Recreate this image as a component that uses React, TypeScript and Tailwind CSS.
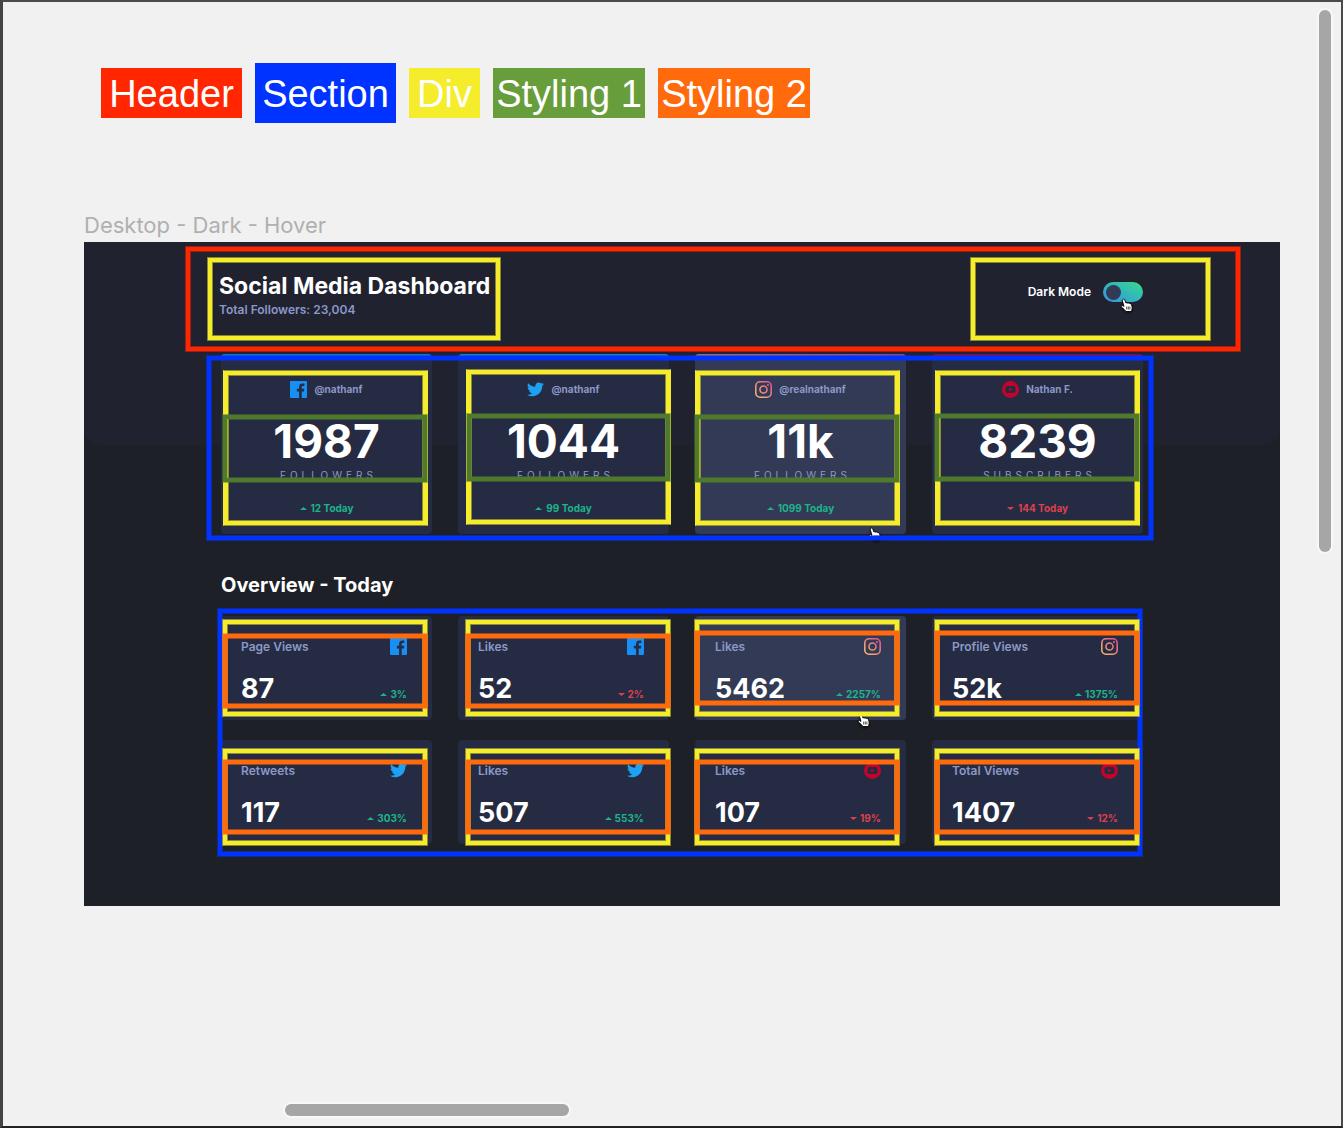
import React from "react";

type Network = "facebook" | "twitter" | "instagram" | "youtube";

const legend = [
  { name: "Header", box: "h-[50px] w-[141px] bg-[#ff2600]" },
  { name: "Section", box: "h-[60px] w-[141px] bg-[#0033ff]" },
  { name: "Div", box: "h-[50px] w-[71px] bg-[#f5ec2c]" },
  { name: "Styling 1", box: "h-[50px] w-[152px] bg-[#689d3c]" },
  { name: "Styling 2", box: "h-[50px] w-[152px] bg-[#ff6a0d]" },
];

const followers = [
  {
    network: "facebook" as Network, handle: "@nathanf", count: "1987", unit: "FOLLOWERS", change: "12 Today", up: true, active: false,
    stripe: "bg-[#178ff5]", div: "left-[2px] right-[4px] top-4 bottom-2", styling: "left-px right-[4px] top-[60px] bottom-[51px]",
  },
  {
    network: "twitter" as Network, handle: "@nathanf", count: "1044", unit: "FOLLOWERS", change: "99 Today", up: true, active: false,
    stripe: "bg-[#1da1f2]", div: "left-2 -right-[2px] top-[15px] bottom-[9px]", styling: "left-2 -right-[2px] top-[59px] bottom-[52px]",
  },
  {
    network: "instagram" as Network, handle: "@realnathanf", count: "11k", unit: "FOLLOWERS", change: "1099 Today", up: true, active: true,
    stripe: "bg-linear-to-r from-[#c77f8c] to-[#b04a9a]", div: "left-0 right-[6px] top-4 bottom-2", styling: "-left-px right-[6px] top-[60px] bottom-[51px]",
  },
  {
    network: "youtube" as Network, handle: "Nathan F.", count: "8239", unit: "SUBSCRIBERS", change: "144 Today", up: false, active: false,
    stripe: "bg-[#a8044a]", div: "left-[3px] right-[3px] top-4 bottom-2", styling: "left-[2px] right-[3px] top-[59px] bottom-[52px]",
  },
];

const colA = "left-px right-[4px]";
const colB = "left-[7px] -right-[2px]";
const colC = "-left-px right-[6px]";
const colD = "left-[2px] right-[3px]";

const overview = [
  { label: "Page Views", network: "facebook" as Network, value: "87", change: "3%", up: true, active: false, col: colA, div: "top-[3px] bottom-[3px]", styling: "top-[17px] bottom-[11px]" },
  { label: "Likes", network: "facebook" as Network, value: "52", change: "2%", up: false, active: false, col: colB, div: "top-[3px] bottom-[3px]", styling: "top-[17px] bottom-[11px]" },
  { label: "Likes", network: "instagram" as Network, value: "5462", change: "2257%", up: true, active: true, col: colC, div: "top-[3px] bottom-[3px]", styling: "top-[14px] bottom-[14px]" },
  { label: "Profile Views", network: "instagram" as Network, value: "52k", change: "1375%", up: true, active: false, col: colD, div: "top-[3px] bottom-[3px]", styling: "top-[14px] bottom-[14px]" },
  { label: "Retweets", network: "twitter" as Network, value: "117", change: "303%", up: true, active: false, col: colA, div: "top-2 -bottom-[2px]", styling: "top-[19px] bottom-[9px]" },
  { label: "Likes", network: "twitter" as Network, value: "507", change: "553%", up: true, active: false, col: colB, div: "top-2 -bottom-[2px]", styling: "top-[19px] bottom-[9px]" },
  { label: "Likes", network: "youtube" as Network, value: "107", change: "19%", up: false, active: false, col: colC, div: "top-2 -bottom-[2px]", styling: "top-[19px] bottom-[9px]" },
  { label: "Total Views", network: "youtube" as Network, value: "1407", change: "12%", up: false, active: false, col: colD, div: "top-2 -bottom-[2px]", styling: "top-[19px] bottom-[9px]" },
];

/* A coloured frame drawn over the block it annotates. */
function Outline({ className }: { className: string }) {
  return (
    <div
      aria-hidden="true"
      className={
        "pointer-events-none absolute border border-current/50 [box-shadow:inset_0_0_0_4px_currentColor,inset_0_0_0_5px_color-mix(in_srgb,currentColor_50%,transparent)] " +
        className
      }
    />
  );
}

function NetworkIcon({ network }: { network: Network }) {
  const id = React.useId();
  if (network === "facebook") {
    return (
      <svg viewBox="0 0 20 20" className="h-[17px] w-[17px] shrink-0" role="img" aria-label="Facebook">
        <path fill="#178FF5" d="M18.896 0H1.104C.494 0 0 .494 0 1.104v17.793C0 19.506.494 20 1.104 20h9.58v-7.745H8.076V9.237h2.606V7.01c0-2.583 1.578-3.99 3.883-3.99 1.104 0 2.052.082 2.329.119v2.7h-1.598c-1.254 0-1.496.597-1.496 1.47v1.928h2.989l-.39 3.018h-2.6V20h5.098c.608 0 1.102-.494 1.102-1.104V1.104C20 .494 19.506 0 18.896 0z" />
      </svg>
    );
  }
  if (network === "twitter") {
    return (
      <svg viewBox="0 -1.5 20 20" className="h-[17px] w-[17px] shrink-0" role="img" aria-label="Twitter">
        <path fill="#1DA1F2" d="M20 2.172a8.192 8.192 0 01-2.357.646 4.11 4.11 0 001.805-2.27 8.22 8.22 0 01-2.606.996A4.096 4.096 0 0013.847.248c-2.65 0-4.596 2.472-3.998 5.037A11.648 11.648 0 011.392 1a4.109 4.109 0 001.27 5.478 4.086 4.086 0 01-1.858-.513c-.045 1.9 1.318 3.679 3.291 4.075a4.113 4.113 0 01-1.853.07 4.106 4.106 0 003.833 2.849A8.25 8.25 0 010 14.658a11.616 11.616 0 006.29 1.843c7.618 0 11.922-6.434 11.662-12.205A8.354 8.354 0 0020 2.172z" />
      </svg>
    );
  }
  if (network === "instagram") {
    return (
      <svg viewBox="0 0 20 20" className="h-[17px] w-[17px] shrink-0" role="img" aria-label="Instagram">
        <defs>
          <linearGradient id={id} gradientUnits="userSpaceOnUse" x1="0" y1="20" x2="20" y2="0">
            <stop offset="0" stopColor="#FDC468" />
            <stop offset="1" stopColor="#DF4996" />
          </linearGradient>
        </defs>
        <rect x="0.95" y="0.95" width="18.1" height="18.1" rx="5" fill="none" stroke={"url(#" + id + ")"} strokeWidth="1.8" />
        <circle cx="10" cy="10" r="4.2" fill="none" stroke={"url(#" + id + ")"} strokeWidth="1.8" />
        <circle cx="15.3" cy="4.7" r="1.2" fill={"url(#" + id + ")"} />
      </svg>
    );
  }
  return (
    <svg viewBox="0 0 20 20" className="h-[17px] w-[17px] shrink-0" role="img" aria-label="YouTube">
      <path fill="#C4032A" fillRule="evenodd" d="M10 0a10 10 0 100 20 10 10 0 000-20zM7 5.800h6c2.200 0 2.900.8 2.900 2.600v3.200c0 1.800-.7 2.600-2.900 2.600H7c-2.200 0-2.900-.8-2.900-2.600V8.400c0-1.800.7-2.600 2.900-2.600z" />
      <path fill="#C4032A" d="M8.300 7.900v4.200l4.200-2.100z" />
    </svg>
  );
}

function Hand({ className }: { className: string }) {
  return (
    <svg viewBox="0 0 14 15" aria-hidden="true" className={"pointer-events-none absolute h-[15px] w-[14px] drop-shadow-[0_1px_1px_rgba(0,0,0,0.6)] " + className}>
      <path
        fill="#fff"
        stroke="#000"
        strokeWidth="0.9"
        strokeLinejoin="round"
        d="M3 1.300c.8-.5 1.500 0 1.800.8l1.200 3c.5-.6 1.400-.5 1.700.1.600-.5 1.500-.3 1.800.4.600-.4 1.500-.2 1.700.6.600 1.700 1.200 3 .9 4.800-.1 1-.7 1.400-.8 2.500H5.800C5.300 12 3.500 11 1.500 9c-.9-1 0-2 1.200-1.400l1.300.8L2.300 2.800c-.2-.6 0-1.200.7-1.500z"
      />
      <path stroke="#000" strokeWidth="0.7" d="M6.700 8.500v3M8.300 8.500v3M9.900 8.500v3" />
    </svg>
  );
}

function Change({ text, up, className }: { text: string; up: boolean; className: string }) {
  return (
    <p className={"flex items-center text-[10px] font-bold " + (up ? "text-[#1db489] " : "text-[#dc414c] ") + className}>
      <svg viewBox="0 0 7 3" className="h-[3px] w-[7px] shrink-0" aria-hidden="true">
        <path fill="currentColor" d={up ? "M0 3L3.500 0l3.500 3z" : "M0 0l3.500 3 3.500-3z"} />
      </svg>
      <span>{text}</span>
    </p>
  );
}

export default function App() {
  return (
    <div className="relative min-h-screen border-t-2 border-r-2 border-b-2 border-l-[3px] border-t-[#4a4a4a] border-r-[#4a4a4a] border-b-[#222] border-l-[#444] bg-[#f1f1f1] font-['Inter',sans-serif]">
      <ul className="flex flex-wrap items-center gap-[13px] pt-[61px] pl-[98px] font-['Liberation_Sans',Arial,sans-serif] text-[38px] leading-none text-white">
        {legend.map((item) => (
          <li key={item.name} className={"flex items-center justify-center pt-[2px] whitespace-nowrap " + item.box}>
            {item.name}
          </li>
        ))}
      </ul>

      <p className="mt-[88px] ml-[81px] text-[22px] leading-[28px] text-[#b0b0b0]">Desktop - Dark - Hover</p>

      <main className="relative mt-[3px] mr-[61px] ml-[81px] bg-[#1e2028] px-[137px] pt-[30px] pb-[62px]">
        <div className="absolute inset-x-0 top-0 h-[203px] rounded-b-[17px] bg-[#20222f]" />
        <Outline className="top-[4px] right-[39px] left-[101px] h-[106px] text-[#ff2600]" />
        <Outline className="top-[15px] left-[123px] h-[84px] w-[294px] text-[#f5ec2c]" />
        <Outline className="top-[15px] right-[69px] h-[84px] w-[241px] text-[#f5ec2c]" />

        <header className="relative flex items-start justify-between">
          <div className="-ml-[2px]">
            <h1 className="text-[23px] leading-[28px] font-bold text-white">Social Media Dashboard</h1>
            <p className="mt-[2px] text-[12px] leading-4 font-semibold text-[#8c98c6]">Total Followers: 23,004</p>
          </div>
          <label className="relative mt-[10px] flex items-center gap-3 text-[12px] leading-5 font-semibold text-white">
            Dark Mode
            <input
              type="checkbox"
              defaultChecked
              className="flex h-5 w-10 cursor-pointer appearance-none items-center rounded-full bg-linear-to-tr from-[#378fe6] to-[#3eda82] px-[3px] before:h-[15px] before:w-[15px] before:rounded-full before:bg-[#333a55]"
            />
            <Hand className="top-4 right-[9px]" />
          </label>
        </header>

        <section className="relative mt-9 grid grid-cols-4 gap-[26px]">
          {followers.map((card) => (
            <article key={card.network} className={"relative rounded-[4px] " + (card.active ? "bg-[#333a55]" : "bg-[#252b42]")}>
              <div className="absolute inset-0 overflow-hidden rounded-[4px]">
                <div className={"h-[3px] opacity-70 " + card.stripe} />
              </div>
              <div className="relative flex flex-col items-center pt-[26px] pb-[19px]">
                <div className="flex h-[18px] items-center gap-[7px]">
                  <NetworkIcon network={card.network} />
                  <span className="text-[10px] leading-none font-bold text-[#8c98c6]">{card.handle}</span>
                </div>
                <p className="mt-[19px] text-[46px] leading-[48px] font-bold text-white">{card.count}</p>
                <p className="mt-1 pl-1 text-[10px] leading-3 tracking-[4px] text-[#8c98c6]">{card.unit}</p>
                <Change text={card.change} up={card.up} className="mt-5 gap-1 leading-[14px]" />
              </div>
              <Outline className={"z-20 border-x-[#f5ec2c] text-[#f5ec2c] " + card.div} />
              <Outline className={"z-20 text-[#4f7a2b] " + card.styling} />
              {card.active && <Hand className="right-[24px] -bottom-[8px]" />}
            </article>
          ))}
          <Outline className="top-px -right-[11px] -bottom-[7px] -left-[15px] z-10 text-[#0033ff]" />
        </section>

        <h2 className="relative mt-[39px] text-[20px] leading-6 font-bold text-white">Overview - Today</h2>

        <section className="relative mt-[19px] grid grid-cols-4 gap-x-[26px] gap-y-5">
          {overview.map((card) => (
            <article
              key={card.label + card.value}
              className={"relative rounded-[4px] pt-[22px] pr-[25px] pb-[17px] pl-5 " + (card.active ? "bg-[#333a55]" : "bg-[#252b42]")}
            >
              <div className="flex items-center justify-between">
                <h3 className="text-[12px] leading-[17px] font-semibold text-[#8c98c6]">{card.label}</h3>
                <NetworkIcon network={card.network} />
              </div>
              <div className="mt-5 flex items-end justify-between">
                <p className="text-[27px] leading-[28px] font-bold text-white">{card.value}</p>
                <Change text={card.change} up={card.up} className="gap-[3px] leading-[18px]" />
              </div>
              <Outline className={"z-20 text-[#f5ec2c] " + card.col + " " + card.div} />
              <Outline className={"z-20 text-[#ff6a0d] " + card.col + " " + card.styling} />
              {card.active && <Hand className="right-[35px] -bottom-[8px]" />}
            </article>
          ))}
          <Outline className="-top-2 right-0 -bottom-[13px] -left-1 z-10 text-[#0033ff]" />
        </section>
      </main>

      <div className="absolute top-2 right-[10px] h-[542px] w-3 rounded-full bg-[#a6a6a6] ring-2 ring-[#f8f8f8]" />
      <div className="absolute bottom-[10px] left-[282px] h-3 w-[284px] rounded-full bg-[#a6a6a6] ring-2 ring-[#f8f8f8]" />
    </div>
  );
}
